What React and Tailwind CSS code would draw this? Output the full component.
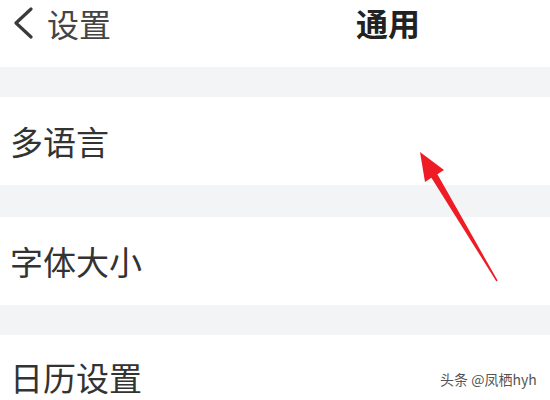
import React from "react";

const font = { fontFamily: '"Noto Sans CJK SC", "Noto Sans", sans-serif' };

function Row({ label }) {
  return (
    <div className="h-[88px] bg-white flex items-center pl-[10px] text-[33px] text-[#333] leading-none">
      {label}
    </div>
  );
}

export default function App() {
  return (
    <div className="relative w-[550px] h-[400px] overflow-hidden bg-white" style={font}>
      <div className="h-[67px] bg-white relative flex items-start pt-[6px] pl-[12px]">
        <div className="flex items-center">
          <svg width="24" height="32" viewBox="0 0 24 32" className="mt-[1px]">
            <path d="M19 2 L4 16 L19 30" fill="none" stroke="#3a3a3a" strokeWidth="3.2" strokeLinecap="round" strokeLinejoin="round" />
          </svg>
          <span className="ml-[11px] text-[32px] leading-none text-[#444]">设置</span>
        </div>
        <span className="absolute left-[356px] top-[6px] text-[32px] leading-none font-bold text-[#222]">通用</span>
      </div>
      <div className="h-[30px] bg-[#f3f4f6]" />
      <Row label="多语言" />
      <div className="h-[32px] bg-[#f3f4f6]" />
      <Row label="字体大小" />
      <div className="h-[30px] bg-[#f3f4f6]" />
      <div className="h-[65px] bg-white flex items-start pt-[26px] pl-[10px] text-[33px] text-[#333] leading-none">
        日历设置
      </div>

      <svg className="absolute left-0 top-0 pointer-events-none" width="550" height="400" viewBox="0 0 550 400">
        <polygon
          points="420,152 444,170 437.4,174.2 497.6,280.6 496.4,281.4 431.4,177.8 425,182"
          fill="#ee1c25"
        />
      </svg>

      <div className="absolute left-[440px] top-[372px] text-[14px] leading-none text-[#555]">
        头条 @凤栖hyh
      </div>
    </div>
  );
}
